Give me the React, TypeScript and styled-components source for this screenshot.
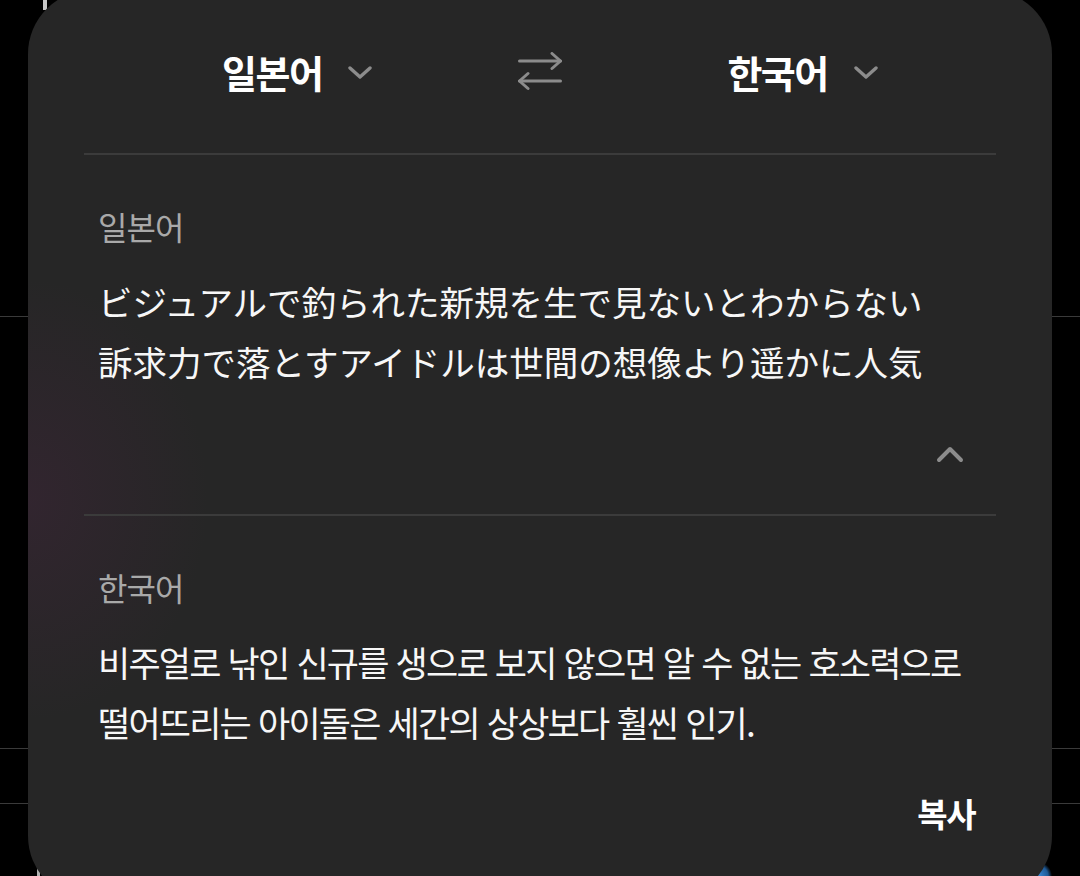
import React from "react";
import styled, { createGlobalStyle } from "styled-components";

const GlobalStyle = createGlobalStyle`
  html, body {
    margin: 0;
    padding: 0;
    background: #000;
  }
  body {
    font-family: "Noto Sans CJK KR", "Noto Sans", sans-serif;
    overflow: hidden;
  }
  * { box-sizing: border-box; }
`;

const Page = styled.div`
  width: 1080px;
  height: 876px;
  overflow: hidden;
  padding: 0 28px;
  background-color: #000;
  background-image:
    linear-gradient(#c8c8c8, #c8c8c8),
    linear-gradient(#b0b0b0, #b0b0b0),
    radial-gradient(circle at 50% 100%, #3a8ad8 0, #1f5a96 10px, transparent 14px),
    linear-gradient(#3a3a3a, #3a3a3a),
    linear-gradient(#3a3a3a, #3a3a3a),
    linear-gradient(#3a3a3a, #3a3a3a);
  background-size: 4px 10px, 3px 14px, 28px 20px, 100% 1px, 100% 1px, 100% 1px;
  background-position: 43px 0, 37px 862px, 1024px 856px, 0 316px, 0 748px, 0 803px;
  background-repeat: no-repeat;
`;

const Panel = styled.div`
  margin-top: -10px;
  height: 910px;
  border-radius: 64px;
  padding: 0 56px;
  display: flex;
  flex-direction: column;
  background:
    radial-gradient(ellipse 180px 220px at 0% 56%, rgba(64, 36, 58, 0.45), transparent),
    #262626;
`;

const Header = styled.div`
  height: 163px;
  display: flex;
  align-items: center;
  padding-left: 138px;
  flex-shrink: 0;
`;

const LangButton = styled.button`
  display: inline-flex;
  align-items: center;
  gap: 26px;
  padding: 0;
  border: none;
  background: none;
  color: #ffffff;
  font-family: "Noto Sans CJK KR", sans-serif;
  font-size: 38px;
  font-weight: 700;
  line-height: 1;
  letter-spacing: -1.5px;
  cursor: pointer;
`;

const SwapButton = styled.button`
  display: flex;
  align-items: center;
  justify-content: center;
  width: 44px;
  height: 40px;
  padding: 0;
  margin: 0 165px 0 146px;
  border: none;
  background: none;
  cursor: pointer;
`;

const Divider = styled.div<{ $top?: number }>`
  height: 2px;
  flex-shrink: 0;
  margin-top: ${(p) => p.$top ?? 0}px;
  background: #3b3b3b;
`;

const Section = styled.section`
  padding: 51px 14px 0;
  display: flex;
  flex-direction: column;
`;

const Label = styled.div`
  font-family: "Noto Sans CJK KR", sans-serif;
  font-size: 32px;
  line-height: 40px;
  letter-spacing: -1px;
  color: #a9a9a9;
`;

const Body = styled.div<{ $lang: "ja" | "ko" }>`
  margin-top: 25px;
  color: #f7f7f7;
  line-height: 60px;
  white-space: nowrap;
  font-family: ${(p) =>
    p.$lang === "ja"
      ? `"Noto Sans CJK JP", sans-serif`
      : `"Noto Sans CJK KR", sans-serif`};
  font-size: ${(p) => (p.$lang === "ja" ? 34.5 : 35)}px;
  letter-spacing: ${(p) => (p.$lang === "ja" ? 0 : -1.8)}px;
  font-weight: 400;
`;

const Line = styled.span`
  display: block;
`;

const ActionRow = styled.div<{ $top: number; $right: number }>`
  display: flex;
  justify-content: flex-end;
  margin-top: ${(p) => p.$top}px;
  padding-right: ${(p) => p.$right}px;
`;

const IconButton = styled.button`
  width: 48px;
  height: 48px;
  display: flex;
  align-items: center;
  justify-content: center;
  padding: 0;
  border: none;
  background: none;
  cursor: pointer;
`;

const CopyButton = styled.button`
  padding: 0;
  border: none;
  background: none;
  color: #ffffff;
  font-family: "Noto Sans CJK KR", sans-serif;
  font-size: 33px;
  font-weight: 700;
  line-height: 40px;
  letter-spacing: -1.5px;
  cursor: pointer;
`;

const ChevronDown = () => (
  <svg width="24" height="16" viewBox="0 0 24 16" fill="none">
    <path d="M2 4 L12 13 L22 4" stroke="#8c8c8c" strokeWidth="3.4" strokeLinecap="round" strokeLinejoin="round" />
  </svg>
);

const ChevronUp = () => (
  <svg width="28" height="18" viewBox="0 0 28 18" fill="none">
    <path d="M3 15 L14 4 L25 15" stroke="#8c8c8c" strokeWidth="4" strokeLinecap="round" strokeLinejoin="round" />
  </svg>
);

const SwapIcon = () => (
  <svg width="44" height="40" viewBox="0 0 44 40" fill="none">
    <g stroke="#8c8c8c" strokeWidth="3" strokeLinecap="round" strokeLinejoin="round">
      <path d="M1.5 9 H42.5" />
      <path d="M34 1.5 L42.5 9 L34 16.5" />
      <path d="M42.5 29 H1.5" />
      <path d="M10 21.5 L1.5 29 L10 36.5" />
    </g>
  </svg>
);

export default function App() {
  return (
    <>
      <GlobalStyle />
      <Page>
        <Panel>
          <Header>
            <LangButton>
              일본어
              <ChevronDown />
            </LangButton>
            <SwapButton aria-label="swap">
              <SwapIcon />
            </SwapButton>
            <LangButton>
              한국어
              <ChevronDown />
            </LangButton>
          </Header>
          <Divider />
          <Section>
            <Label>일본어</Label>
            <Body $lang="ja" lang="ja">
              <Line>ビジュアルで釣られた新規を生で見ないとわからない</Line>
              <Line>訴求力で落とすアイドルは世間の想像より遥かに人気</Line>
            </Body>
          </Section>
          <ActionRow $top={39} $right={22}>
            <IconButton aria-label="collapse">
              <ChevronUp />
            </IconButton>
          </ActionRow>
          <Divider $top={36} />
          <Section>
            <Label>한국어</Label>
            <Body $lang="ko" lang="ko">
              <Line>비주얼로 낚인 신규를 생으로 보지 않으면 알 수 없는 호소력으로</Line>
              <Line>떨어뜨리는 아이돌은 세간의 상상보다 훨씬 인기.</Line>
            </Body>
          </Section>
          <ActionRow $top={41} $right={21}>
            <CopyButton>복사</CopyButton>
          </ActionRow>
        </Panel>
      </Page>
    </>
  );
}
